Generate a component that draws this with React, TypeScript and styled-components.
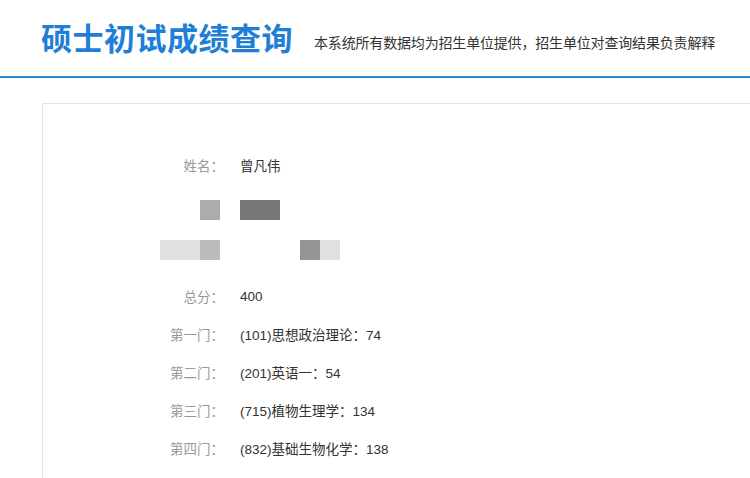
import { FC } from 'react';
import styled, { createGlobalStyle } from 'styled-components';

const Global = createGlobalStyle`
  html, body {
    margin: 0;
    padding: 0;
    background: #fff;
    overflow: hidden;
  }
  body {
    font-family: 'Liberation Sans', 'Noto Sans CJK SC', sans-serif;
  }
`;

const Header = styled.div`
  display: flex;
  align-items: flex-end;
  height: 78px;
  padding-left: 41px;
  border-bottom: 2px solid #2b88c9;
  box-sizing: border-box;
`;

const Title = styled.h1`
  margin: 0 0 21px;
  font-family: 'Noto Sans CJK SC', sans-serif;
  font-size: 31px;
  line-height: 36px;
  font-weight: 700;
  color: #1f7fd6;
  letter-spacing: 0.5px;
`;

const Notice = styled.div`
  margin: 0 0 25px 21px;
  font-size: 14px;
  line-height: 16px;
  letter-spacing: -0.17px;
  color: #333;
  white-space: nowrap;
`;

const Panel = styled.div`
  margin: 25px 0 0 42px;
  width: 800px;
  height: 420px;
  border: 1px solid #e4e4e4;
  padding-top: 42px;
  box-sizing: border-box;
`;

const Row = styled.div<{ $mt?: number }>`
  display: flex;
  align-items: center;
  height: 38px;
  margin-top: ${(p) => p.$mt ?? 0}px;
  font-size: 13.5px;
`;

const Label = styled.div`
  width: 181px;
  text-align: right;
  color: #999;
  white-space: nowrap;
`;

const Value = styled.div`
  margin-left: 16px;
  color: #333;
  white-space: nowrap;
`;

const Mosaic = styled.div`
  display: flex;
  height: 20px;
`;

const Cell = styled.div<{ $w: number; $c: string }>`
  width: ${(p) => p.$w}px;
  height: 20px;
  background: ${(p) => p.$c};
`;

const LabelMosaic = styled.div`
  display: flex;
  justify-content: flex-end;
  width: 177px;
`;

const ValueMosaic = styled.div<{ $ml: number }>`
  display: flex;
  margin-left: ${(p) => p.$ml}px;
`;

type Px = [number, string];

const Pixels: FC<{ cells: Px[] }> = ({ cells }) => (
  <Mosaic>
    {cells.map(([w, c], i) => (
      <Cell key={i} $w={w} $c={c} />
    ))}
  </Mosaic>
);

const scores = [
  { label: '第一门：', value: '(101)思想政治理论：74' },
  { label: '第二门：', value: '(201)英语一：54' },
  { label: '第三门：', value: '(715)植物生理学：134' },
  { label: '第四门：', value: '(832)基础生物化学：138' },
];

export default function App() {
  return (
    <>
      <Global />
      <Header>
        <Title>硕士初试成绩查询</Title>
        <Notice>本系统所有数据均为招生单位提供，招生单位对查询结果负责解释</Notice>
      </Header>
      <Panel>
        <Row>
          <Label>姓名：</Label>
          <Value>曾凡伟</Value>
        </Row>
        <Row $mt={7}>
          <LabelMosaic>
            <Pixels cells={[[20, '#acacac']]} />
          </LabelMosaic>
          <ValueMosaic $ml={20}>
            <Pixels cells={[[40, '#777777']]} />
          </ValueMosaic>
        </Row>
        <Row $mt={2}>
          <LabelMosaic>
            <Pixels
              cells={[
                [40, '#e0e0e0'],
                [20, '#bcbcbc'],
              ]}
            />
          </LabelMosaic>
          <ValueMosaic $ml={80}>
            <Pixels
              cells={[
                [20, '#959595'],
                [20, '#e0e0e0'],
              ]}
            />
          </ValueMosaic>
        </Row>
        <Row $mt={8}>
          <Label>总分：</Label>
          <Value>400</Value>
        </Row>
        {scores.map((s) => (
          <Row key={s.label}>
            <Label>{s.label}</Label>
            <Value>{s.value}</Value>
          </Row>
        ))}
      </Panel>
    </>
  );
}
